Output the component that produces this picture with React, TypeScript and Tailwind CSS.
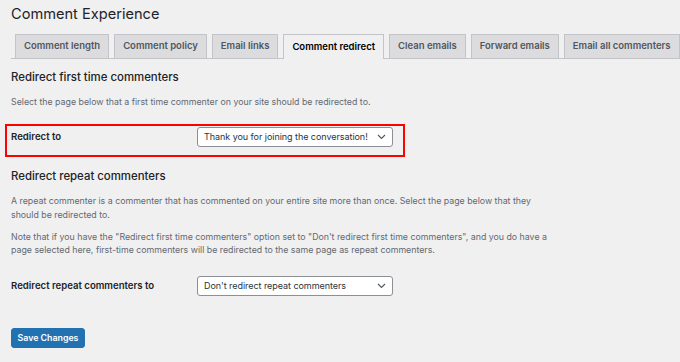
import React from "react";

const tabs = [
  "Comment length",
  "Comment policy",
  "Email links",
  "Comment redirect",
  "Clean emails",
  "Forward emails",
  "Email all commenters",
];

function Chevron() {
  return (
    <svg width="9" height="6" viewBox="0 0 9 6" fill="none" className="shrink-0">
      <path d="M1 1l3.5 3.5L8 1" stroke="#50575e" strokeWidth="1.1" />
    </svg>
  );
}

function Select({ value }: { value: string }) {
  return (
    <div className="w-[196px] h-[20px] bg-white border border-[#8c8f94] rounded-[3px] pl-[6px] pr-[6px] flex items-center justify-between gap-[4px] text-[9px] tracking-[-0.05px] text-[#2c3338]">
      <span className="whitespace-nowrap overflow-hidden">{value}</span>
      <Chevron />
    </div>
  );
}

export default function App() {
  return (
    <div
      className="min-h-screen bg-[#f0f0f1] pl-[11px] text-[#1d2327]"
      style={{ fontFamily: "Inter, 'Noto Sans', sans-serif" }}
    >
      <h1 className="h-[34px] pt-[4px] text-[14.6px] leading-[20px] font-normal text-[#1d2327]">
        Comment Experience
      </h1>
      <nav className="flex items-end gap-[5px] pl-[4px] h-[25px] border-b border-[#c3c4c7]">
        {tabs.map((t) =>
          t === "Comment redirect" ? (
            <div
              key={t}
              className="h-[25px] -mb-px px-[8px] flex items-center border border-b-0 border-[#c3c4c7] bg-[#f0f0f1] text-[9.5px] font-semibold text-black whitespace-nowrap"
            >
              {t}
            </div>
          ) : (
            <div
              key={t}
              className="h-[24px] px-[8px] flex items-center border border-b-0 border-[#c3c4c7] bg-[#dcdcde] text-[9.5px] font-semibold text-[#50575e] whitespace-nowrap"
            >
              {t}
            </div>
          )
        )}
      </nav>

      <h2 className="mt-[10px] text-[11.4px] leading-[16px] font-medium">
        Redirect first time commenters
      </h2>
      <p className="mt-[10px] text-[8.8px] leading-[13px] text-[#646970]">
        Select the page below that a first time commenter on your site should be redirected to.
      </p>

      <div className="relative mt-[19px] h-[20px] flex items-center">
        <div className="w-[186px] text-[9.6px] font-semibold">Redirect to</div>
        <Select value="Thank you for joining the conversation!" />
        <div className="absolute left-[-6px] top-[-3px] w-[400px] h-[33px] border-2 border-[#ff0000] pointer-events-none" />
      </div>

      <h2 className="mt-[21px] text-[11.4px] leading-[16px] font-medium">
        Redirect repeat commenters
      </h2>
      <p className="mt-[10px] text-[8.8px] leading-[14px] text-[#646970]">
        A repeat commenter is a commenter that has commented on your entire site more than once. Select the page below that they
        <br />
        should be redirected to.
      </p>
      <p className="mt-[8px] text-[8.8px] leading-[13px] text-[#646970]">
        Note that if you have the "Redirect first time commenters" option set to "Don't redirect first time commenters", and you do have a
        <br />
        page selected here, first-time commenters will be redirected to the same page as repeat commenters.
      </p>

      <div className="mt-[20px] h-[20px] flex items-center">
        <div className="w-[186px] text-[9.6px] font-semibold">Redirect repeat commenters to</div>
        <Select value="Don't redirect repeat commenters" />
      </div>

      <button className="mt-[32px] h-[20px] w-[74px] bg-[#2271b1] border border-[#2271b1] rounded-[3px] text-white text-[8.8px] font-semibold flex items-center justify-center">
        Save Changes
      </button>
    </div>
  );
}
